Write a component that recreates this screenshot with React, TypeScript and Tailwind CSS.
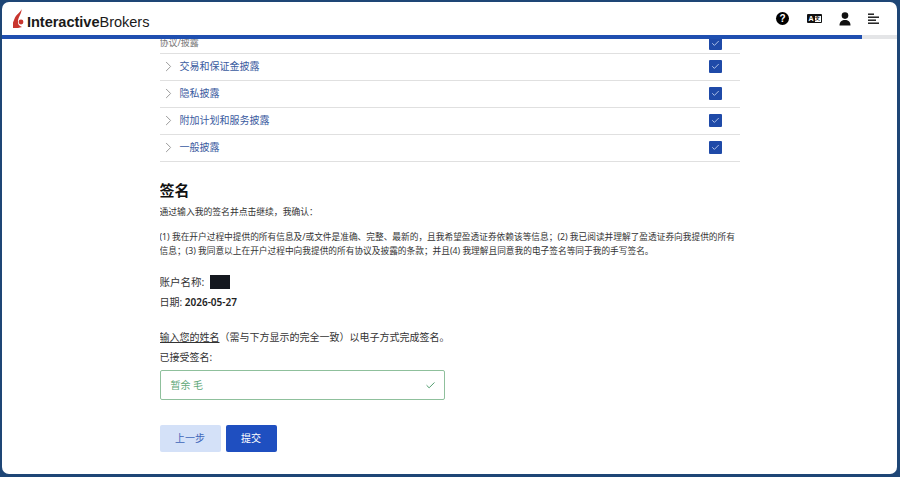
import { ChevronRight, Check } from 'lucide-react'

const ROWS = ['交易和保证金披露', '隐私披露', '附加计划和服务披露', '一般披露']

function Checkbox() {
  return (
    <span className="flex h-[13px] w-[13px] items-center justify-center rounded-[1px] bg-[#1f4aa8]">
      <Check className="h-[9px] w-[9px] text-[#dbe6fb]" strokeWidth={2} />
    </span>
  )
}

function Logo() {
  return (
    <div className="mt-[8px] flex items-center">
      <svg width="11" height="20" viewBox="0 0 11 20" className="mr-[3px] mt-[-8px]">
        <path d="M8.5 0 C8 3 4 5 2 8.5 L0 13.5 L0 19 L5 19 L9 18 C6 17 4.5 15 5 12 C5.3 8 9 4 8.5 0Z" fill="#c8352e" />
        <circle cx="8" cy="13" r="2.4" fill="#c8352e" />
      </svg>
      <span className="font-['Liberation_Sans',sans-serif] text-[14.6px] leading-none tracking-[-0.05px] text-[#1a1a1a]">
        <span className="font-bold">Interactive</span>Brokers
      </span>
    </div>
  )
}

function HeaderIcons() {
  return (
    <div className="flex items-center">
      <span className="flex h-[13px] w-[13px] items-center justify-center rounded-full bg-black font-['Liberation_Sans',sans-serif] text-[10px] font-bold leading-none text-white">?</span>
      <span className="ml-[18px] flex h-[9px] w-[15px] items-center justify-between rounded-[1px] bg-[#111] px-[1.5px] font-['Liberation_Sans',sans-serif] text-[7px] font-bold leading-none text-white">
        <span>A</span>
        <span className="flex h-[6px] w-[6px] items-center justify-center bg-white text-[5px] text-[#111]">文</span>
      </span>
      <svg width="12" height="14" viewBox="0 0 12 14" className="ml-[17px]">
        <circle cx="6" cy="3.6" r="3.3" fill="#111" />
        <path d="M0.5 13.5 C0.5 9.5 3 8 6 8 C9 8 11.5 9.5 11.5 13.5Z" fill="#111" />
      </svg>
      <svg width="11" height="12" viewBox="0 0 11 12" className="ml-[17px]">
        <rect x="0" y="0.5" width="6" height="1.4" fill="#111" />
        <rect x="0" y="3.5" width="11" height="1.4" fill="#111" />
        <rect x="0" y="6.5" width="8" height="1.4" fill="#111" />
        <rect x="0" y="9.5" width="11" height="1.4" fill="#111" />
      </svg>
    </div>
  )
}

export default function App() {
  return (
    <div className='h-[477px] w-[900px] overflow-hidden bg-[#1e4676] pb-[3px] pl-[2px] pr-[3px] pt-[2px] font-["Noto_Sans","Noto_Sans_CJK_SC",sans-serif] [text-spacing-trim:space-all]'>
      <div className="flex h-full flex-col overflow-hidden rounded-[7px] bg-white">
        <header className="flex h-[33px] shrink-0 items-center justify-between pl-[11px] pr-[18px]">
          <Logo />
          <HeaderIcons />
        </header>
        <div className="h-[4px] shrink-0 bg-[#e4e5e7]">
          <div className="h-full w-[860px] bg-[#1f4fb0]" />
        </div>

        <main className="mx-auto w-[580px] flex-1 overflow-hidden">
          <div className="mt-[-5px] flex h-[20px] items-center justify-between border-b border-[#e0e0e0] pb-[1px] pr-[18px]">
            <span className="text-[9px] text-[#777]">协议/披露</span>
            <Checkbox />
          </div>
          {ROWS.map(r => (
            <div key={r} className="flex h-[27px] items-center border-b border-[#e0e0e0] pb-[1px] pr-[18px]">
              <ChevronRight className="h-[17px] w-[17px] text-[#9a9a9a]" strokeWidth={1.4} />
              <span className="ml-[3px] flex-1 text-[10px] text-[#3a5ba0]">{r}</span>
              <Checkbox />
            </div>
          ))}

          <h2 className="mt-[17px] text-[15px] font-bold leading-[22px] text-[#111]">签名</h2>
          <p className="mt-[4px] text-[8.8px] leading-[14px] text-[#333]">通过输入我的签名并点击继续，我确认：</p>
          <p className="mt-[11px] text-[8.7px] leading-[14px] text-[#333]">
            (1) 我在开户过程中提供的所有信息及/或文件是准确、完整、最新的，且我希望盈透证券依赖该等信息；(2) 我已阅读并理解了盈透证券向我提供的所有信息；(3) 我同意以上在开户过程中向我提供的所有协议及披露的条款；并且(4) 我理解且同意我的电子签名等同于我的手写签名。
          </p>

          <div className="mt-[17px] flex h-[16px] items-center text-[10.5px] text-[#333]">
            账户名称:
            <span className="ml-[6px] mt-[-2px] h-[14px] w-[20px] bg-[#14181f]" />
          </div>
          <div className="mt-[3px] text-[10px] leading-[16px] text-[#333]">
            日期: <span className="font-semibold text-[#222]">2026-05-27</span>
          </div>

          <div className="mt-[19px] text-[10px] leading-[16px] text-[#333]">
            <span className="underline">输入您的姓名</span>（需与下方显示的完全一致）以电子方式完成签名。
          </div>
          <div className="mt-[4px] text-[10px] leading-[16px] text-[#333]">已接受签名:</div>

          <div className="mt-[5px] flex h-[30px] w-[285px] items-center justify-between rounded-[2px] border border-[#8fc09c] px-[10px] text-[10px] text-[#5fa878]">
            <span>暂余 毛</span>
            <Check className="mr-[-2px] h-[11px] w-[11px] text-[#3f9460]" strokeWidth={2} />
          </div>

          <div className="mt-[25px] flex gap-[5px] text-[10px]">
            <button className="flex h-[27px] w-[61px] items-center justify-center rounded-[2px] bg-[#d4e1f8] text-[#3f66b8]">上一步</button>
            <button className="flex h-[27px] w-[51px] items-center justify-center rounded-[2px] bg-[#1f4fc0] text-white">提交</button>
          </div>
        </main>
      </div>
    </div>
  )
}
